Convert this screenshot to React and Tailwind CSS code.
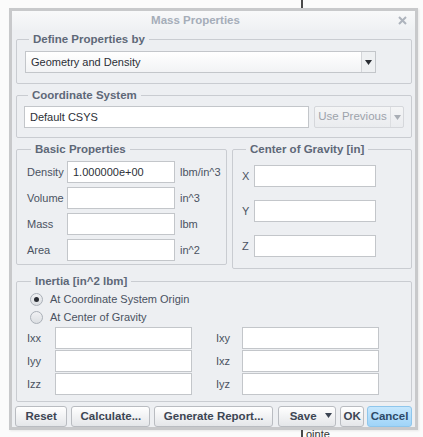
import React from 'react';

const Group = ({ title, className = '', children }) => (
  <fieldset className={`border border-[#c9ccd1] rounded-[2px] ${className}`}>
    <legend className="ml-[4px] px-[4px] text-[11.5px] font-bold leading-[14px] text-[#5e6878]">
      {title}
    </legend>
    {children}
  </fieldset>
);

const Field = ({ className = '', value = '' }) => (
  <div
    className={`h-[22px] bg-white border border-[#c3c6ca] px-[5px] flex items-center text-[11px] text-[#2b2f36] ${className}`}
  >
    {value}
  </div>
);

const Btn = ({ w, children, primary }) => (
  <button
    className={`h-[21px] ${w} rounded-[3px] border text-[11.5px] font-bold flex items-center justify-center ${
      primary
        ? 'border-[#8ec6ec] bg-gradient-to-b from-[#c6e7fd] to-[#9fd4f8] text-[#2d4a68]'
        : 'border-[#b9bcc1] bg-gradient-to-b from-white to-[#e4e6e9] text-[#3c4553]'
    }`}
  >
    {children}
  </button>
);

const Radio = ({ checked, label }) => (
  <div className="h-[18px] flex items-center">
    <span className="ml-[3px] w-[13px] h-[13px] rounded-full border border-[#aab0b8] bg-gradient-to-b from-[#f0f1f3] to-[#dcdfe3] flex items-center justify-center">
      {checked && <span className="w-[5px] h-[5px] rounded-full bg-[#2a2d33]" />}
    </span>
    <span className="ml-[7px] text-[11px] text-[#4a5261]">{label}</span>
  </div>
);

const Triangle = ({ color = '#2a2d33' }) => (
  <svg width="7" height="5" viewBox="0 0 7 5">
    <path d="M0 0 H7 L3.5 5 Z" fill={color} />
  </svg>
);

export default function App() {
  const basic = [
    ['Density', '1.000000e+00', 'lbm/in^3'],
    ['Volume', '', 'in^3'],
    ['Mass', '', 'lbm'],
    ['Area', '', 'in^2'],
  ];
  const inertia = [
    ['Ixx', 'Ixy'],
    ['Iyy', 'Ixz'],
    ['Izz', 'Iyz'],
  ];

  return (
    <div className="relative w-[423px] h-[437px] overflow-hidden bg-[#fbfbfb] font-['Liberation_Sans',Arial,sans-serif]">
      {/* content behind the dialog */}
      <div className="absolute left-[301px] top-0 w-[2px] h-[437px] bg-[#4a4a4a]" />
      <div className="absolute left-[306px] top-[428px] text-[11px] leading-[12px] text-[#333]">ointe</div>

      <div className="relative ml-[9px] mt-[8px] w-[409px] border-[3px] border-[#c8c9cb] bg-[#edeff2] shadow-[1px_1px_2px_rgba(0,0,0,0.08)]">
        {/* title bar */}
        <div className="h-[19px] flex items-center bg-gradient-to-b from-[#f8f9fa] to-[#eff1f3]">
          <div className="flex-1 text-center pr-[19px] text-[11.5px] font-bold text-[#a5adb9]">Mass Properties</div>
          <svg width="9" height="9" viewBox="0 0 9 9" className="mr-[8px]">
            <path d="M1 1 L8 8 M8 1 L1 8" stroke="#aeb4bd" strokeWidth="2" />
          </svg>
        </div>

        <div className="pl-[4px] pr-[3px]">
          <Group title="Define Properties by" className="mt-[2px] px-[8px] pt-[5px] pb-[10px]">
            <div className="w-[351px] h-[22px] flex border border-[#c3c6ca] bg-gradient-to-b from-white to-[#f2f3f5]">
              <div className="flex-1 px-[5px] flex items-center text-[11px] text-[#2b2f36]">Geometry and Density</div>
              <div className="w-[14px] border-l border-[#d3d5d9] flex items-center justify-center bg-[#eef0f2]">
                <Triangle />
              </div>
            </div>
          </Group>

          <Group title="Coordinate System" className="mt-[4px] px-[7px] pt-[4px] pb-[9px]">
            <div className="flex items-start gap-[5px]">
              <Field className="w-[285px] h-[21px]" value="Default CSYS" />
              <div className="w-[90px] h-[22px] flex rounded-[2px] border border-[#d5d7db] bg-gradient-to-b from-[#f4f5f6] to-[#eaecef]">
                <div className="flex-1 flex items-center justify-center text-[11.5px] text-[#9da3ab]">Use Previous</div>
                <div className="w-[13px] border-l border-[#dcdee1] flex items-center justify-center">
                  <Triangle color="#a9aeb5" />
                </div>
              </div>
            </div>
          </Group>

          <div className="mt-[4px] flex items-start gap-[5px]">
            <Group title="Basic Properties" className="w-[211px] pl-[10px] pr-[4px] pt-[5px] pb-[3px]">
              <div className="flex flex-col gap-[4px]">
                {basic.map(([label, value, unit]) => (
                  <div key={label} className="flex items-center">
                    <span className="w-[40px] text-[11px] text-[#4a5261]">{label}</span>
                    <Field className="w-[108px]" value={value} />
                    <span className="ml-[5px] text-[11px] text-[#4a5261]">{unit}</span>
                  </div>
                ))}
              </div>
            </Group>

            <Group title="Center of Gravity [in]" className="w-[180px] pl-[9px] pr-[4px] pt-[9px] pb-[11px]">
              <div className="flex flex-col gap-[13px]">
                {['X', 'Y', 'Z'].map((l) => (
                  <div key={l} className="flex items-center">
                    <span className="w-[12px] text-[11px] text-[#4a5261]">{l}</span>
                    <Field className="w-[122px]" />
                  </div>
                ))}
              </div>
            </Group>
          </div>

          <Group title="Inertia [in^2 lbm]" className="mt-[5px] pl-[10px] pr-[4px] pt-[2px] pb-[6px]">
            <Radio checked label="At Coordinate System Origin" />
            <Radio label="At Center of Gravity" />
            <div className="mt-[1px] flex flex-col gap-[1px]">
              {inertia.map(([a, b]) => (
                <div key={a} className="flex items-center">
                  <span className="w-[28px] text-[11px] text-[#4a5261]">{a}</span>
                  <Field className="w-[137px] h-[21px]" />
                  <span className="ml-[24px] w-[26px] text-[11px] text-[#4a5261]">{b}</span>
                  <Field className="w-[137px] h-[21px]" />
                </div>
              ))}
            </div>
          </Group>

          <div className="mt-[4px] flex items-center gap-[4px] -ml-[1px]">
            <Btn w="w-[53px]">Reset</Btn>
            <Btn w="w-[80px]">Calculate...</Btn>
            <Btn w="w-[120px]">Generate Report...</Btn>
            <button className="ml-[1px] h-[21px] w-[59px] rounded-[3px] border border-[#b9bcc1] bg-gradient-to-b from-white to-[#e4e6e9] text-[11.5px] font-bold text-[#3c4553] flex items-center">
              <span className="flex-1 text-center pl-[2px]">Save</span>
              <span className="mr-[3px] mb-[3px]"><Triangle color="#3c4553" /></span>
            </button>
            <Btn w="w-[24px]">OK</Btn>
            <div className="-ml-[1px]">
              <Btn w="w-[45px]" primary>Cancel</Btn>
            </div>
          </div>
        </div>
      </div>
    </div>
  );
}
